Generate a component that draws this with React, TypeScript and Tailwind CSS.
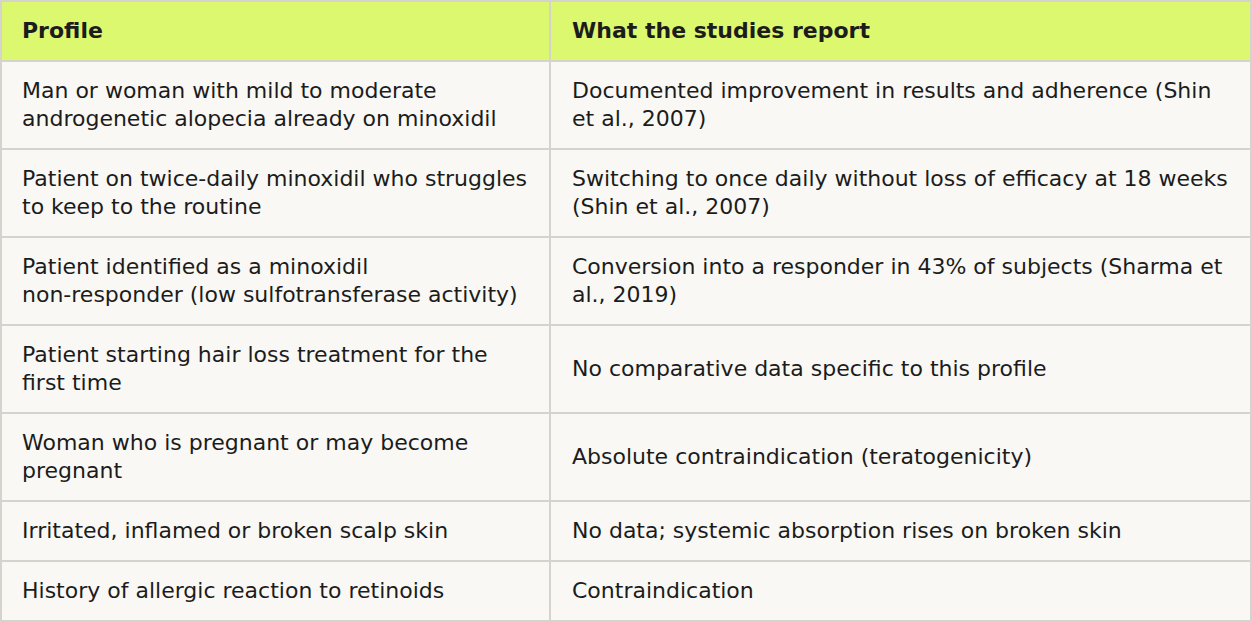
import React from "react";

const rows: [React.ReactNode, string][] = [
  [
    "Man or woman with mild to moderate androgenetic alopecia already on minoxidil",
    "Documented improvement in results and adherence (Shin et al., 2007)",
  ],
  [
    "Patient on twice-daily minoxidil who struggles to keep to the routine",
    "Switching to once daily without loss of efficacy at 18 weeks (Shin et al., 2007)",
  ],
  [
    <>
      Patient identified as a minoxidil{" "}
      <span className="whitespace-nowrap">non-responder</span> (low
      sulfotransferase activity)
    </>,
    "Conversion into a responder in 43% of subjects (Sharma et al., 2019)",
  ],
  [
    "Patient starting hair loss treatment for the first time",
    "No comparative data specific to this profile",
  ],
  [
    "Woman who is pregnant or may become pregnant",
    "Absolute contraindication (teratogenicity)",
  ],
  [
    "Irritated, inflamed or broken scalp skin",
    "No data; systemic absorption rises on broken skin",
  ],
  ["History of allergic reaction to retinoids", "Contraindication"],
];

export default function App() {
  return (
    <div
      className="w-[1252px] bg-white"
      style={{ fontFamily: '"DejaVu Sans", Verdana, sans-serif' }}
    >
      <table className="w-[1252px] table-fixed border-collapse border-2 border-[#d4d3cc] text-[22px] leading-[28px] text-[#1c1c1c]">
        <colgroup>
          <col className="w-[549px]" />
          <col />
        </colgroup>
        <thead>
          <tr className="bg-[#dcf86e]">
            <th className="border-2 border-[#d4d3cc] px-5 py-[15px] text-left font-bold">
              Profile
            </th>
            <th className="border-2 border-[#d4d3cc] pl-[21px] pr-5 py-[15px] text-left font-bold">
              What the studies report
            </th>
          </tr>
        </thead>
        <tbody>
          {rows.map(([a, b], i) => (
            <tr key={i} className="bg-[#f9f8f5]">
              <td className="border-2 border-[#d4d3cc] px-5 py-[15px] align-middle">
                {a}
              </td>
              <td className="border-2 border-[#d4d3cc] pl-[21px] pr-5 py-[15px] align-middle">
                {b}
              </td>
            </tr>
          ))}
        </tbody>
      </table>
    </div>
  );
}
